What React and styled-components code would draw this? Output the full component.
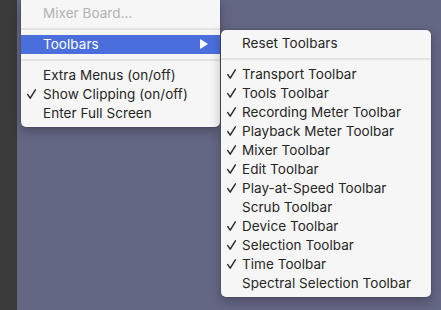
import styled, { createGlobalStyle } from 'styled-components';

const Global = createGlobalStyle`
  html, body {
    margin: 0;
    padding: 0;
    background: #646784;
    height: 100%;
    overflow: hidden;
  }
  body {
    font-family: Inter, "Noto Sans", sans-serif;
    -webkit-font-smoothing: antialiased;
  }
`;

const Screen = styled.div`
  display: flex;
  align-items: flex-start;
  height: 310px;
  width: 441px;
`;

const Strip = styled.div`
  width: 17px;
  height: 100%;
  background: #3b3b3b;
  flex: none;
`;

const Menu = styled.div`
  flex: none;
  width: ${(p) => p.width}px;
  margin-left: ${(p) => p.left || 0}px;
  margin-top: ${(p) => p.top || 0}px;
  background: #f6f6f6;
  border-radius: ${(p) => (p.sub ? '5px' : '0 0 5px 5px')};
  padding: 4px 0;
  box-shadow: 0 0 0 0.5px rgba(0, 0, 0, 0.18), 0 4px 12px rgba(0, 0, 0, 0.28);
  position: relative;
  z-index: ${(p) => (p.sub ? 2 : 1)};
`;

const Row = styled.div`
  display: flex;
  align-items: center;
  box-sizing: border-box;
  height: 19px;
  padding-bottom: 1px;
  font-size: 13.5px;
  letter-spacing: 0.05px;
  color: ${(p) => (p.disabled ? '#b3b3b3' : p.active ? '#ffffff' : '#262626')};
  background: ${(p) => (p.active ? '#4a6fdc' : 'transparent')};
  white-space: nowrap;
`;

const CheckCell = styled.span`
  width: ${(p) => p.w}px;
  flex: none;
  display: flex;
  align-items: center;
  padding-left: 6px;
  box-sizing: border-box;
`;

const Label = styled.span`
  flex: 1;
`;

const Arrow = styled.svg`
  width: 8px;
  height: 10px;
  margin-right: 12px;
  flex: none;
`;

const Tick = styled.svg`
  width: 9px;
  height: 10px;
`;

const Separator = styled.div`
  height: 12px;
  display: flex;
  align-items: center;
  &::after {
    content: '';
    flex: 1;
    height: 2px;
    background: #e3e3e3;
  }
`;

function Item({ label, checked, disabled, active, submenu, checkW }) {
  return (
    <Row disabled={disabled} active={active}>
      <CheckCell w={checkW}>
        {checked && (
          <Tick viewBox="0 0 9 10">
            <path
              d="M0.8 5.6 L3.2 9.1 L8.4 0.9"
              fill="none"
              stroke="#2a2a2a"
              strokeWidth="1.5"
              strokeLinecap="round"
              strokeLinejoin="round"
            />
          </Tick>
        )}
      </CheckCell>
      <Label>{label}</Label>
      {submenu && (
        <Arrow viewBox="0 0 8 10">
          <path d="M0 0 L8 5 L0 10 Z" fill="#fff" />
        </Arrow>
      )}
    </Row>
  );
}

const toolbars = [
  ['Transport Toolbar', true],
  ['Tools Toolbar', true],
  ['Recording Meter Toolbar', true],
  ['Playback Meter Toolbar', true],
  ['Mixer Toolbar', true],
  ['Edit Toolbar', true],
  ['Play-at-Speed Toolbar', true],
  ['Scrub Toolbar', false],
  ['Device Toolbar', true],
  ['Selection Toolbar', true],
  ['Time Toolbar', true],
  ['Spectral Selection Toolbar', false],
];

export default function App() {
  return (
    <>
      <Global />
      <Screen>
        <Strip />
        <Menu width={199} left={4} top={0}>
          <Item label="Mixer Board..." disabled checkW={22} />
          <Separator />
          <Item label="Toolbars" active submenu checkW={22} />
          <Separator />
          <Item label="Extra Menus (on/off)" checkW={22} />
          <Item label="Show Clipping (on/off)" checked checkW={22} />
          <Item label="Enter Full Screen" checkW={22} />
        </Menu>
        <Menu sub width={210} left={1} top={30}>
          <Item label="Reset Toolbars" checkW={21} />
          <Separator />
          {toolbars.map(([label, on]) => (
            <Item key={label} label={label} checked={on} checkW={21} />
          ))}
        </Menu>
      </Screen>
    </>
  );
}
